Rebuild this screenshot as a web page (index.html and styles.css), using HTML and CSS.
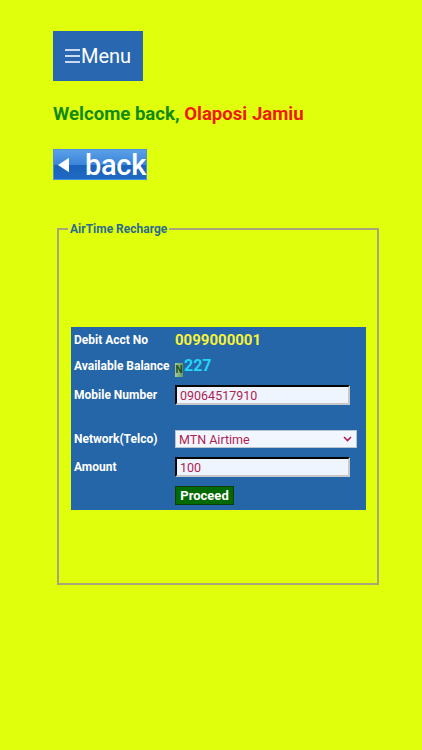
FILE: index.html
```html
<!DOCTYPE html>
<html lang="en">
<head>
    <meta charset="UTF-8">
    <meta name="viewport" content="width=device-width, initial-scale=1.0">
    <title>AirTime Recharge</title>
    <link rel="stylesheet" href="styles.css">
</head>
<body>

<div class="page">
    <a class="menu-btn" href="#">
        <svg class="menu-icon" width="15" height="14" viewBox="0 0 15 14">
            <path d="M0 1h15M0 7h15M0 13h15" stroke="#fff" stroke-width="1.4"/>
        </svg>Menu
    </a>

    <h3 class="welcome">Welcome back, <span class="user">Olaposi Jamiu</span></h3>

    <a class="back-btn" href="#">
        <svg class="back-arrow" width="12" height="16" viewBox="0 0 12 16">
            <path d="M12 0V16L0 8Z" fill="#fff"/>
        </svg>
        <span>back</span>
    </a>

    <fieldset class="box">
        <legend>AirTime Recharge</legend>

        <table class="form-table">
            <tr class="row-a">
                <td class="lbl">Debit Acct No</td>
                <td><span class="acct">0099000001</span></td>
            </tr>
            <tr class="row-b">
                <td class="lbl">Available Balance</td>
                <td><span class="naira">N</span><span class="bal">227</span></td>
            </tr>
            <tr class="row-c">
                <td class="lbl">Mobile Number</td>
                <td><input type="text" class="field" value="09064517910"></td>
            </tr>
            <tr class="row-gap"><td></td><td></td></tr>
            <tr class="row-d">
                <td class="lbl">Network(Telco)</td>
                <td>
                    <span class="select-wrap">
                        <select class="network">
                            <option>MTN Airtime</option>
                            <option>Glo Airtime</option>
                            <option>Airtel Airtime</option>
                            <option>9mobile Airtime</option>
                        </select>
                        <svg class="chevron" width="9" height="6" viewBox="0 0 9 6">
                            <path d="M1 1l3.5 3.5L8 1" stroke="#b01e50" stroke-width="1.6" fill="none"/>
                        </svg>
                    </span>
                </td>
            </tr>
            <tr class="row-d">
                <td class="lbl">Amount</td>
                <td><input type="text" class="field" value="100"></td>
            </tr>
            <tr class="row-d">
                <td></td>
                <td><button class="proceed">Proceed</button></td>
            </tr>
        </table>
    </fieldset>
</div>

</body>
</html>
```

FILE: styles.css
```css
body {
    margin: 0;
    background-color: #dfff0c;
    font-family: Roboto, "Liberation Sans", Arial, sans-serif;
}
.page {
    padding: 31px 0 40px 53px;
}
.menu-btn {
    display: flex;
    align-items: center;
    justify-content: center;
    width: 90px;
    height: 50px;
    background-color: #2968b0;
    color: white;
    font-size: 20px;
    text-decoration: none;
    box-sizing: border-box;
}
.menu-icon {
    margin-right: 1px;
}
.welcome {
    margin: 22px 0 0 0;
    font-size: 18.6px;
    line-height: 22px;
    font-weight: bold;
    color: #128a12;
}
.user {
    color: #f01a0a;
}
.back-btn {
    display: flex;
    align-items: center;
    width: 94px;
    height: 31px;
    margin-top: 24px;
    box-sizing: border-box;
    border: 1px solid #4d93dd;
    background: linear-gradient(#5b9fe8, #3b86da 50%, #1a62ba 52%, #1f6ac4);
    color: white;
    font-size: 29px;
    font-weight: 500;
    text-decoration: none;
}
.back-btn span {
    margin-left: 16px;
    line-height: 28px;
    letter-spacing: -0.3px;
}
.back-arrow {
    margin-left: 4px;
}
.box {
    width: 322px;
    margin: 42px 0 0 4px;
    padding: 0 0 73px 0;
    border: 2px solid #a6a67a;
    box-sizing: border-box;
}
.box legend {
    margin-left: 9px;
    padding: 0 2px;
    font-size: 12px;
    font-weight: bold;
    line-height: 14px;
    color: #2d6b8c;
}
.form-table {
    width: 295px;
    margin: 91px 0 0 12px;
    border-spacing: 0;
    background-color: #2566a8;
    padding-bottom: 1px;
}
.form-table td {
    padding: 0;
    vertical-align: middle;
}
.form-table td.lbl {
    width: 101px;
    padding-left: 3px;
    color: white;
    font-size: 12px;
    font-weight: bold;
    white-space: nowrap;
}
.row-a { height: 25px; }
.row-b { height: 28px; }
.row-c { height: 30px; }
.row-gap { height: 15px; }
.row-d { height: 28px; }
.acct {
    color: #f5f23a;
    font-size: 15px;
    font-weight: bold;
}
.naira {
    display: inline-block;
    width: 8px;
    height: 14px;
    margin-right: 1px;
    vertical-align: -2px;
    background: linear-gradient(90deg, #a9c99a, #5f9a5a);
    color: #1d4d1d;
    font-size: 10px;
    font-weight: bold;
    line-height: 14px;
    text-align: center;
}
.bal {
    color: #22d4f5;
    font-size: 16px;
    font-weight: bold;
}
.field {
    display: block;
    width: 175px;
    height: 20px;
    padding: 0 3px;
    box-sizing: border-box;
    border: 2px inset #767676;
    border-color: #5a5a5a #c8c8c8 #c8c8c8 #5a5a5a;
    background-color: #eef5ff;
    color: #b01e50;
    font-family: Roboto, "Liberation Sans", Arial, sans-serif;
    font-size: 12.5px;
}
.select-wrap {
    position: relative;
    display: block;
    width: 182px;
}
.network {
    display: block;
    width: 182px;
    height: 18px;
    padding: 0 3px;
    box-sizing: border-box;
    border: 1px solid #b8c4d0;
    background-color: #f2f7ff;
    color: #b01e50;
    font-family: Roboto, "Liberation Sans", Arial, sans-serif;
    font-size: 12.5px;
    appearance: none;
    -webkit-appearance: none;
}
.chevron {
    position: absolute;
    right: 5px;
    top: 6px;
    pointer-events: none;
}
.proceed {
    display: block;
    width: 59px;
    height: 19px;
    padding: 0;
    border: 1px solid #0b3b0b;
    background-color: #036a03;
    color: white;
    font-family: Roboto, "Liberation Sans", Arial, sans-serif;
    font-size: 13px;
    font-weight: bold;
    cursor: pointer;
}
```
